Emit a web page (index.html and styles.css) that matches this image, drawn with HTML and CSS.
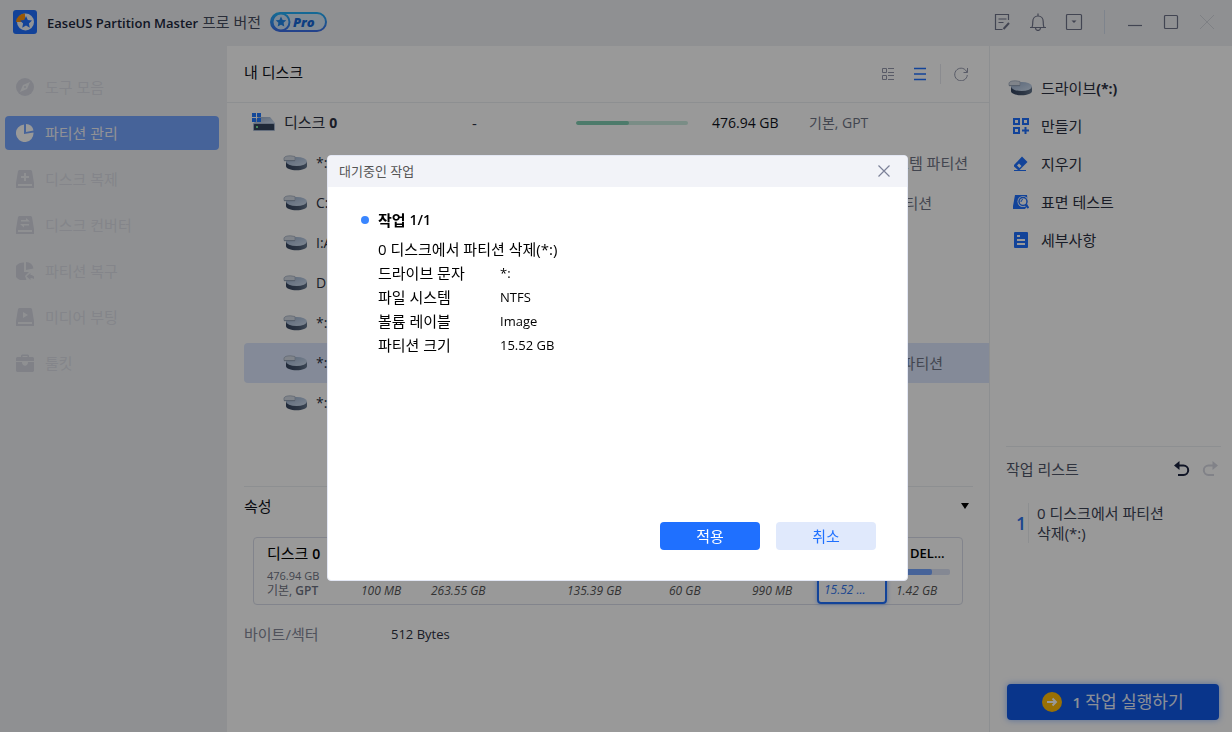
FILE: index.html
```html
<!DOCTYPE html>
<html lang="ko">
<head>
<meta charset="utf-8">
<title>EaseUS Partition Master</title>
<link rel="stylesheet" href="styles.css">
</head>
<body>
<svg class="defs" aria-hidden="true">
  <defs>
    <linearGradient id="top" x1="0" y1="0" x2="1" y2="1"><stop offset="0" stop-color="#98aecd"/><stop offset="1" stop-color="#d3e1f3"/></linearGradient>
    <linearGradient id="side" x1="0" y1="0" x2="1" y2="0"><stop offset="0" stop-color="#34445f"/><stop offset=".6" stop-color="#4a5a72"/><stop offset="1" stop-color="#66788f"/></linearGradient>
    <linearGradient id="pro" x1="0" y1="0" x2="0" y2="1"><stop offset="0" stop-color="#22b0f8"/><stop offset="1" stop-color="#3b6fe8"/></linearGradient>
    <symbol id="drive" viewBox="0 0 24 16">
      <path d="M3 6.500v4.500c0 2.500 4.700 4.300 10.500 4.300S24 13.500 24 11V6.500z" fill="url(#side)"/>
      <ellipse cx="13.500" cy="6.500" rx="10.500" ry="4.500" fill="url(#top)"/>
      <path d="M1 5.500V3C1.500 1.500 4 .8 7.500 .8L12 1.500V5.500z" fill="#d6dde7" stroke="#a3afc0" stroke-width=".8"/>
      <path d="M1 5.700h11" stroke="#8796aa" stroke-width=".8"/>
    </symbol>
    <symbol id="disk" viewBox="0 0 24 20">
      <path d="M6 5h12l5 6H2z" fill="url(#top)"/>
      <rect x="1" y="11" width="22" height="8" rx="1" fill="#a9bad2"/>
      <rect x="2" y="12" width="20" height="6" rx=".5" fill="#34455e"/>
      <rect x="4" y="14" width="2" height="2" fill="#76e39a"/>
      <path d="M0 1h4v4H0zM5 1h4v4H5zM0 6h4v4H0zM5 6h4v4H5z" fill="#2079ff"/>
    </symbol>
  </defs>
</svg>
<div class="app">
  <header class="titlebar">
    <svg class="logo" viewBox="0 0 24 24"><rect width="24" height="24" rx="3" fill="#1f6fff"/><circle cx="12.500" cy="12" r="8.500" fill="#f2f5fb"/><path d="M12 12H3a9 9 0 0 1 9-8.500z" fill="#ff930a"/><path d="M13 6l1.800 4 4.200.5-3.100 2.900.9 4.300L13 15.600l-3.800 2.100.9-4.300L7 10.500l4.200-.5z" fill="#1f6fff"/></svg>
    <h1 class="app-name"><strong>EaseUS Partition Master</strong> 프로 버전</h1>
    <svg class="pro" viewBox="0 0 58 22" role="img" aria-label="Pro"><rect x="1" y="2" width="55" height="18" rx="9" fill="#d8e9f8" stroke="url(#pro)" stroke-width="2"/><circle cx="11" cy="11" r="8.500" fill="#cfe4fb" stroke="url(#pro)" stroke-width="2"/><path d="M11 5.500l1.600 3.400 3.700.4-2.700 2.500.7 3.700-3.300-1.800-3.300 1.800.7-3.700-2.700-2.500 3.700-.4z" fill="#2186e8"/><text x="23" y="16" class="pro-text">Pro</text></svg>
    <div class="window-tools">
      <button aria-label="로그"><svg viewBox="0 0 18 18"><path d="M15.500 7V1.500h-13v15h7M5.500 6h8M5.500 9.500h5"/><path d="M10.500 16l5.500-6" stroke-width="2"/></svg></button>
      <button aria-label="알림"><svg viewBox="0 0 18 18"><path d="M1 14.500h16M3 14.500c.7-1.500.8-3 .8-6 0-3 2-5.500 5.200-5.500s5.200 2.500 5.200 5.500c0 3 .1 4.500.8 6M9 3V.5M6.500 15c.3 3.300 4.700 3.300 5 0"/></svg></button>
      <button aria-label="메뉴"><svg viewBox="0 0 18 18"><rect x="1.500" y="1.500" width="15" height="15" rx="1"/><path class="caret" d="M6.500 7.500h5L9 10z"/></svg></button>
    </div>
    <div class="window-controls">
      <button aria-label="최소화"><svg viewBox="0 0 18 18"><path d="M2 12.500h14"/></svg></button>
      <button aria-label="최대화"><svg viewBox="0 0 18 18"><rect x="2.500" y="2.500" width="13" height="13" rx="1"/></svg></button>
      <button aria-label="닫기" disabled><svg viewBox="0 0 18 18"><path d="M2 2l14 14M16 2L2 16"/></svg></button>
    </div>
  </header>

  <nav class="sidebar">
    <a href="#"><svg viewBox="0 0 18 18"><circle cx="9" cy="9" r="9"/><path class="cut" d="M14 4l-3 7-7 3 3-7z"/><circle cx="9" cy="9" r="1"/></svg>도구 모음</a>
    <a href="#" class="active"><svg viewBox="0 0 18 18"><path d="M8 .5V10l9.500-1.500A8.800 8.800 0 1 1 8 .5z"/><path d="M10 0a8 8 0 0 1 7.500 6.500L10 8z"/></svg>파티션 관리</a>
    <a href="#"><svg viewBox="0 0 18 18"><path d="M3 0h12l1 1 2 12v5H0v-5L2 1z"/><path class="cut" d="M8 3h2v3h3v2h-3v3H8V8H5V6h3zM2 14h14v2H2z"/></svg>디스크 복제</a>
    <a href="#"><svg viewBox="0 0 18 18"><path d="M3 0h12l1 1 2 12v5H0v-5L2 1z"/><path class="cut" d="M5 4h5V2l4 3.500H5zM13 9.500H8v2L4 8h9zM2 14h14v2H2z"/></svg>디스크 컨버터</a>
    <a href="#"><svg viewBox="0 0 18 18"><path d="M8 .5V10h5l-4 4 1.500 3.800A9 9 0 1 1 8 .5z"/><path d="M10 0a8 8 0 0 1 7.500 6.500L10 8z"/><path d="M10.500 14.500l4-3.500v2c3 0 4.500 2 4.500 5-1-1.500-2.500-2-4.500-2v2z"/></svg>파티션 복구</a>
    <a href="#"><svg viewBox="0 0 18 18"><path d="M3 0h12l1 1 2 12v5H0v-5L2 1z"/><path class="cut" d="M7 4l5 3-5 3zM2 14h14v2H2z"/></svg>미디어 부팅</a>
    <a href="#"><svg viewBox="0 0 18 18"><path d="M5 3V1.500L6 .5h6l1 1V3h4l1 1v3H0V4l1-1zM6.500 3h5V2h-5z" fill-rule="evenodd"/><path d="M0 8h6c0 5 6 5 6 0h6v9l-1 1H1l-1-1z"/></svg>툴킷</a>
  </nav>

  <main class="main">
    <div class="toolbar">
      <h2>내 디스크</h2>
      <button aria-label="상세 보기"><svg viewBox="0 0 14 14"><path d="M1.500 1.500h4v4h-4zM1.500 8.500h4v4h-4zM7 1.500h6M7 5.500h6M7 8.500h6M7 12.500h6"/></svg></button>
      <button class="on" aria-label="목록 보기"><svg viewBox="0 0 14 14"><path d="M1 1.500h12M1 7h12M1 12.500h12"/></svg></button>
      <button class="refresh" aria-label="새로 고침"><svg viewBox="0 0 14 14"><path d="M13 5.500A6.300 6.300 0 1 0 13.300 8M13.500 1v4.500H9.500"/></svg></button>
    </div>
    <div class="disks">
      <div class="row disk"><svg class="disk-icon"><use href="#disk"/></svg><span class="name">디스크 <b>0</b></span><span class="fs">-</span><span class="meter"><i></i></span><span class="size">476.94 GB</span><span class="type">기본, GPT</span></div>
      <div class="row"><svg class="drive-icon"><use href="#drive"/></svg><span class="part">*:</span><span class="kind wide">시스템 파티션</span></div>
      <div class="row"><svg class="drive-icon"><use href="#drive"/></svg><span class="part">C:</span><span class="kind">파티션</span></div>
      <div class="row"><svg class="drive-icon"><use href="#drive"/></svg><span class="part">I:A</span></div>
      <div class="row"><svg class="drive-icon"><use href="#drive"/></svg><span class="part">D:</span></div>
      <div class="row"><svg class="drive-icon"><use href="#drive"/></svg><span class="part">*:W</span></div>
      <div class="row selected"><svg class="drive-icon"><use href="#drive"/></svg><span class="part">*:</span><span class="kind mid">파티션</span></div>
      <div class="row"><svg class="drive-icon"><use href="#drive"/></svg><span class="part">*:D</span></div>
    </div>
    <section class="props">
      <div class="props-head"><h3>속성</h3><button aria-label="접기"><svg viewBox="0 0 8 6"><path d="M0 0h8L4 6z"/></svg></button></div>
      <div class="map">
        <div class="map-info"><span class="map-name">디스크 <b>0</b></span><span class="map-size">476.94 GB</span><span>기본, <b>GPT</b></span></div>
        <div class="cell c1"><em>100 MB</em></div>
        <div class="cell c2"><em>263.55 GB</em></div>
        <div class="cell c3"><em>135.39 GB</em></div>
        <div class="cell c4"><em>60 GB</em></div>
        <div class="cell c5"><em>990 MB</em></div>
        <div class="cell c6"><em>15.52 ...</em></div>
        <div class="cell c7"><strong>*: DEL...</strong><span class="usage"><i></i></span><em>1.42 GB</em></div>
      </div>
      <dl class="sector"><dt>바이트/섹터</dt><dd>512 Bytes</dd></dl>
    </section>
  </main>

  <aside class="side">
    <div class="actions">
      <div class="target"><svg class="drive-icon"><use href="#drive"/></svg><span>드라이브<b>(*:)</b></span></div>
      <button><svg viewBox="0 0 16 16"><path d="M1 1h5v5H1zM10 1h5v5h-5zM1 10h5v5H1zM12.500 9v7M9 12.500h7" fill="none" stroke="#1f70ff" stroke-width="2"/></svg>만들기</button>
      <button><svg viewBox="0 0 16 16"><path d="M1 9l8-8.500 5.500 5.500-8 8H5L1 10.500zM4 9.500L6.500 12l2-2L6 7.500z" fill-rule="evenodd"/><path d="M1 14h12v1H1z"/></svg>지우기</button>
      <button><svg viewBox="0 0 16 16"><path d="M2 1h12l1 10-3 4H0V12z"/><circle cx="10" cy="7.500" r="5.500" fill="#fff"/><circle cx="10" cy="7.500" r="4" fill="none" stroke="#1f70ff" stroke-width="1.500"/><path d="M8 8a2.200 2.200 0 0 1 2-2.500" fill="none" stroke="#1f70ff"/><path d="M12.500 10.500l3 3.500" stroke="#1f70ff" stroke-width="2"/></svg>표면 테스트</button>
      <button><svg viewBox="0 0 16 16"><rect x="1" y="0" width="14" height="16" rx="1"/><path d="M4 3h3v2H4zM4 7h8v2H4zM4 11h8v2H4z" fill="#fff"/></svg>세부사항</button>
    </div>
    <section class="queue">
      <div class="queue-head"><h3>작업 리스트</h3>
        <button aria-label="실행 취소"><svg viewBox="0 0 16 16"><path d="M0 4.500L5.500 0v9z" fill="#1c2440"/><path d="M4 4.500h5.500a4.700 4.700 0 0 1 0 9.400H4" stroke="#1c2440"/></svg></button>
        <button aria-label="다시 실행" disabled><svg viewBox="0 0 16 16"><path d="M16 4.500L10.500 0v9z" fill="#d8d9e3"/><path d="M12 4.500H6.500a4.700 4.700 0 0 0 0 9.400H12" stroke="#d8d9e3"/></svg></button>
      </div>
      <div class="task"><span class="num">1</span><p>0 디스크에서 파티션 삭제(*:)</p></div>
    </section>
    <button class="run"><svg viewBox="0 0 20 20"><circle cx="10" cy="10" r="10" fill="#ffbb08"/><path d="M5 10h9M10.500 6.500L14 10l-3.500 3.500" fill="none" stroke="#fff" stroke-width="2"/></svg><span><b>1</b> 작업 실행하기</span></button>
  </aside>
</div>

<div class="backdrop">
  <div class="dialog" role="dialog" aria-labelledby="dlg-title">
    <header class="dialog-head"><h2 id="dlg-title">대기중인 작업</h2><button aria-label="닫기"><svg viewBox="0 0 12 12"><path d="M.5.5l11 11M11.500.5L.5 11.500"/></svg></button></header>
    <div class="dialog-body">
      <h3>작업 <span>1/1</span></h3>
      <p>0 디스크에서 파티션 삭제(*:)</p>
      <dl>
        <dt>드라이브 문자</dt><dd>*:</dd>
        <dt>파일 시스템</dt><dd>NTFS</dd>
        <dt>볼륨 레이블</dt><dd>Image</dd>
        <dt>파티션 크기</dt><dd>15.52 GB</dd>
      </dl>
    </div>
    <footer><button class="primary">적용</button><button class="secondary">취소</button></footer>
  </div>
</div>
</body>
</html>
```
FILE: styles.css
```css
* { box-sizing: border-box; }
body {
  margin: 0;
  font: 15px/20px "Open Sans", "Noto Sans CJK KR", sans-serif;
  color: #2c3142;
}
h1, h2, h3, p, dl, dd { margin: 0; font-weight: 400; font-size: 15px; }
button { border: 0; padding: 0; background: none; font: inherit; color: inherit; }
a { color: inherit; text-decoration: none; }
svg { display: block; flex: none; }
.defs { position: absolute; width: 0; height: 0; }

.app {
  display: grid;
  grid-template: 46px 1fr / 227px 1fr 242px;
  min-height: 100vh;
  background: #eff1f4;
}

.titlebar {
  grid-column: 1 / -1;
  display: flex;
  align-items: center;
  padding: 0 16px 2px 13px;
}
.logo { width: 24px; height: 24px; }
.app-name { margin: 0 9px 0 10px; color: #454b5e; }
.app-name strong { font-size: 13px; font-weight: 600; color: #20273c; }
.pro { width: 58px; height: 22px; }
.pro-text { font: italic 800 13px "Open Sans", sans-serif; fill: #1769d8; }
.window-tools, .window-controls { display: flex; gap: 18px; }
.window-tools { margin-left: auto; padding-right: 21px; border-right: 1px solid #d3dceb; height: 24px; align-items: center; }
.window-controls { padding-left: 21px; }
.titlebar button svg { width: 18px; height: 18px; fill: none; stroke: #6f7389; stroke-width: 1.2; }
.titlebar button .caret { fill: #6f7389; stroke: none; }
.titlebar button:disabled svg { stroke: #d3d5dc; stroke-width: 1; }

.sidebar { display: flex; flex-direction: column; gap: 12px; padding: 24px 8px 0 5px; color: #dcdee6; }
.sidebar a { display: flex; align-items: center; gap: 11px; height: 34px; padding: 0 0 1px 11px; border-radius: 4px; }
.sidebar svg { width: 18px; height: 18px; fill: #d5d7e2; }
.sidebar .cut { fill: #eff1f4; }
.sidebar .active { background: #75a5ff; color: #f2f4fa; }
.sidebar .active svg { fill: #fff; }

.main { display: flex; flex-direction: column; background: #fff; border-right: 1px solid #eceef2; min-width: 0; }
.toolbar { display: flex; align-items: center; height: 57px; padding: 0 21px 0 17px; border-bottom: 1px solid #eceef2; }
.toolbar h2 { margin-right: auto; padding-bottom: 5px; color: #10131c; }
.toolbar button { margin-right: 18px; }
.toolbar svg { width: 14px; height: 14px; fill: none; stroke: #9498ac; stroke-width: 1; }
.toolbar .on { margin-right: 13px; }
.toolbar .on svg { stroke: #1f70ff; stroke-width: 1.5; }
.toolbar .refresh { margin: 0; padding: 3px 0 3px 13px; border-left: 1px solid #e6e8ee; }

.disks { flex: 1; padding-left: 17px; }
.row { display: flex; align-items: center; height: 40px; padding: 0 0 1px 39px; border-radius: 4px 0 0 4px; }
.row.disk { padding-left: 8px; }
.selected { background: #dce7fd; }
.disk-icon { width: 24px; height: 20px; margin-bottom: 2px; }
.drive-icon { width: 24px; height: 16px; }
.name { width: 188px; margin-left: 8px; }
.name b, .target b { font-size: 14px; }
.fs { width: 104px; }
.meter { width: 112px; height: 4px; border-radius: 2px; background: #ccebdf; overflow: hidden; }
.meter i { display: block; width: 47%; height: 100%; border-radius: 2px; background: #81cdb2; }
.size { width: 74px; margin-left: 24px; font-size: 14px; color: #10131c; white-space: nowrap; }
.type { margin-left: 23px; font-size: 14px; color: #6f7484; }
.part { margin-left: 9px; font-size: 14px; }
.kind { margin-left: auto; padding-right: 57px; color: #6f7484; }
.kind.wide { padding-right: 21px; }
.kind.mid { padding-right: 46px; }

.props { margin: 0 16px 88px 17px; border-top: 1px solid #eceef2; }
.props-head { display: flex; align-items: center; justify-content: space-between; height: 38px; padding-right: 4px; }
.props-head h3 { color: #10131c; }
.props-head svg { width: 8px; height: 6px; }
.map { display: flex; height: 68px; margin: 12px 10px 19px 9px; border: 1px solid #d9dde9; border-radius: 4px; }
.map-info { display: flex; flex-direction: column; width: 98px; padding: 5px 0 0 13px; font-size: 12px; line-height: 15px; color: #6f7484; }
.map-name { margin-bottom: 4px; font-size: 15px; line-height: 20px; color: #000; }
.map-name b { font-size: 14px; }
.map-size { font-size: 11px; }
.map-info b { font-weight: 600; }
.cell { display: flex; flex-direction: column; justify-content: flex-end; padding: 0 0 5px 9px; font-size: 12px; line-height: 16px; color: #555; white-space: nowrap; }
.c1 { width: 70px; }
.c2 { width: 136px; }
.c3 { width: 102px; }
.c4 { width: 83px; }
.c5 { width: 74px; }
.c6 { width: 70px; margin: -2px 0 0; padding: 0 0 4px 5px; border: 2px solid #1f70ff; border-radius: 4px; color: #2f74ee; box-shadow: 0 0 4px #1f70ff80; }
.c7 { flex: 1; padding-right: 12px; gap: 8px; }
.c7 strong { font-size: 13px; font-weight: 600; color: #000; }
.usage { height: 6px; border-radius: 2px; background: #dce3f5; }
.usage i { display: block; width: 66%; height: 100%; border-radius: 2px; background: #75a5ff; }
.sector { display: flex; }
.sector dt { width: 147px; color: #858999; }
.sector dd { font-size: 13px; }

.side { display: flex; flex-direction: column; background: #fff; padding: 24px 11px 12px 16px; }
.actions { display: flex; flex-direction: column; gap: 2px; height: 376px; align-items: flex-start; }
.target, .actions button { display: flex; align-items: center; height: 36px; }
.target { gap: 9px; padding-left: 2px; }
.actions button { gap: 12px; padding-left: 7px; }
.actions button svg { width: 16px; height: 16px; fill: #1f70ff; }
.queue { flex: 1; border-top: 1px solid #eceef2; }
.queue-head { display: flex; align-items: center; gap: 12px; height: 44px; padding-right: 3px; }
.queue-head h3 { margin-right: auto; color: #51576a; }
.queue-head svg { width: 16px; height: 16px; fill: none; stroke-width: 2; }
.task { display: flex; align-items: center; margin-top: 12px; padding-right: 40px; }
.task p { padding-left: 8px; line-height: 20px; color: #3c4356; border-left: 1px solid #eceef2; }
.num { width: 25px; padding-left: 10px; font-size: 18px; font-weight: 600; color: #2f74ee; }
.run { display: flex; align-items: center; justify-content: center; gap: 10px; height: 36px; margin: 0 2px 0 1px; border-radius: 4px; background: #0f59e8; color: #e8effc; font-size: 17px; box-shadow: 0 0 6px #1f70ff80; }
.run svg { width: 20px; height: 20px; }
.run b { font-size: 15px; font-weight: 600; }

.backdrop {
  position: fixed;
  inset: 0;
  display: grid;
  place-items: center;
  padding: 4px 0 0 3px;
  background: rgba(0, 0, 0, .4);
}
.dialog { display: flex; flex-direction: column; width: 581px; max-width: 90%; min-height: 426px; border: 1px solid #e3e7f4; border-radius: 4px; background: #fff; color: #000; }
.dialog-head { display: flex; align-items: center; justify-content: space-between; height: 31px; padding: 0 17px 2px 11px; background: #f2f3f8; border-radius: 4px 4px 0 0; }
.dialog-head h2 { font-size: 13px; color: #555; }
.dialog-head svg { width: 12px; height: 12px; fill: none; stroke: #7c8198; stroke-width: 1.2; }
.dialog-body { flex: 1; padding: 21px 50px; }
.dialog-body h3 { display: flex; align-items: center; gap: 4px; line-height: 24px; font-weight: 700; margin: 0 0 5px -17px; }
.dialog-body h3::before { content: ""; width: 8px; height: 8px; margin-right: 5px; border-radius: 50%; background: #3a86ff; }
.dialog-body h3 span { font-size: 14px; font-weight: 600; }
.dialog-body p, .dialog-body dl { line-height: 24px; }
.dialog-body dl { display: grid; grid-template-columns: 122px 1fr; }
.dialog-body dd { font-size: 13px; }
.dialog footer { display: flex; justify-content: flex-end; gap: 16px; padding: 0 31px 30px; }
.dialog footer button { width: 100px; height: 28px; border-radius: 4px; }
.primary { background: #1f70ff; color: #fff; }
.secondary { background: #e0e9fc; color: #1f70ff; }
```
